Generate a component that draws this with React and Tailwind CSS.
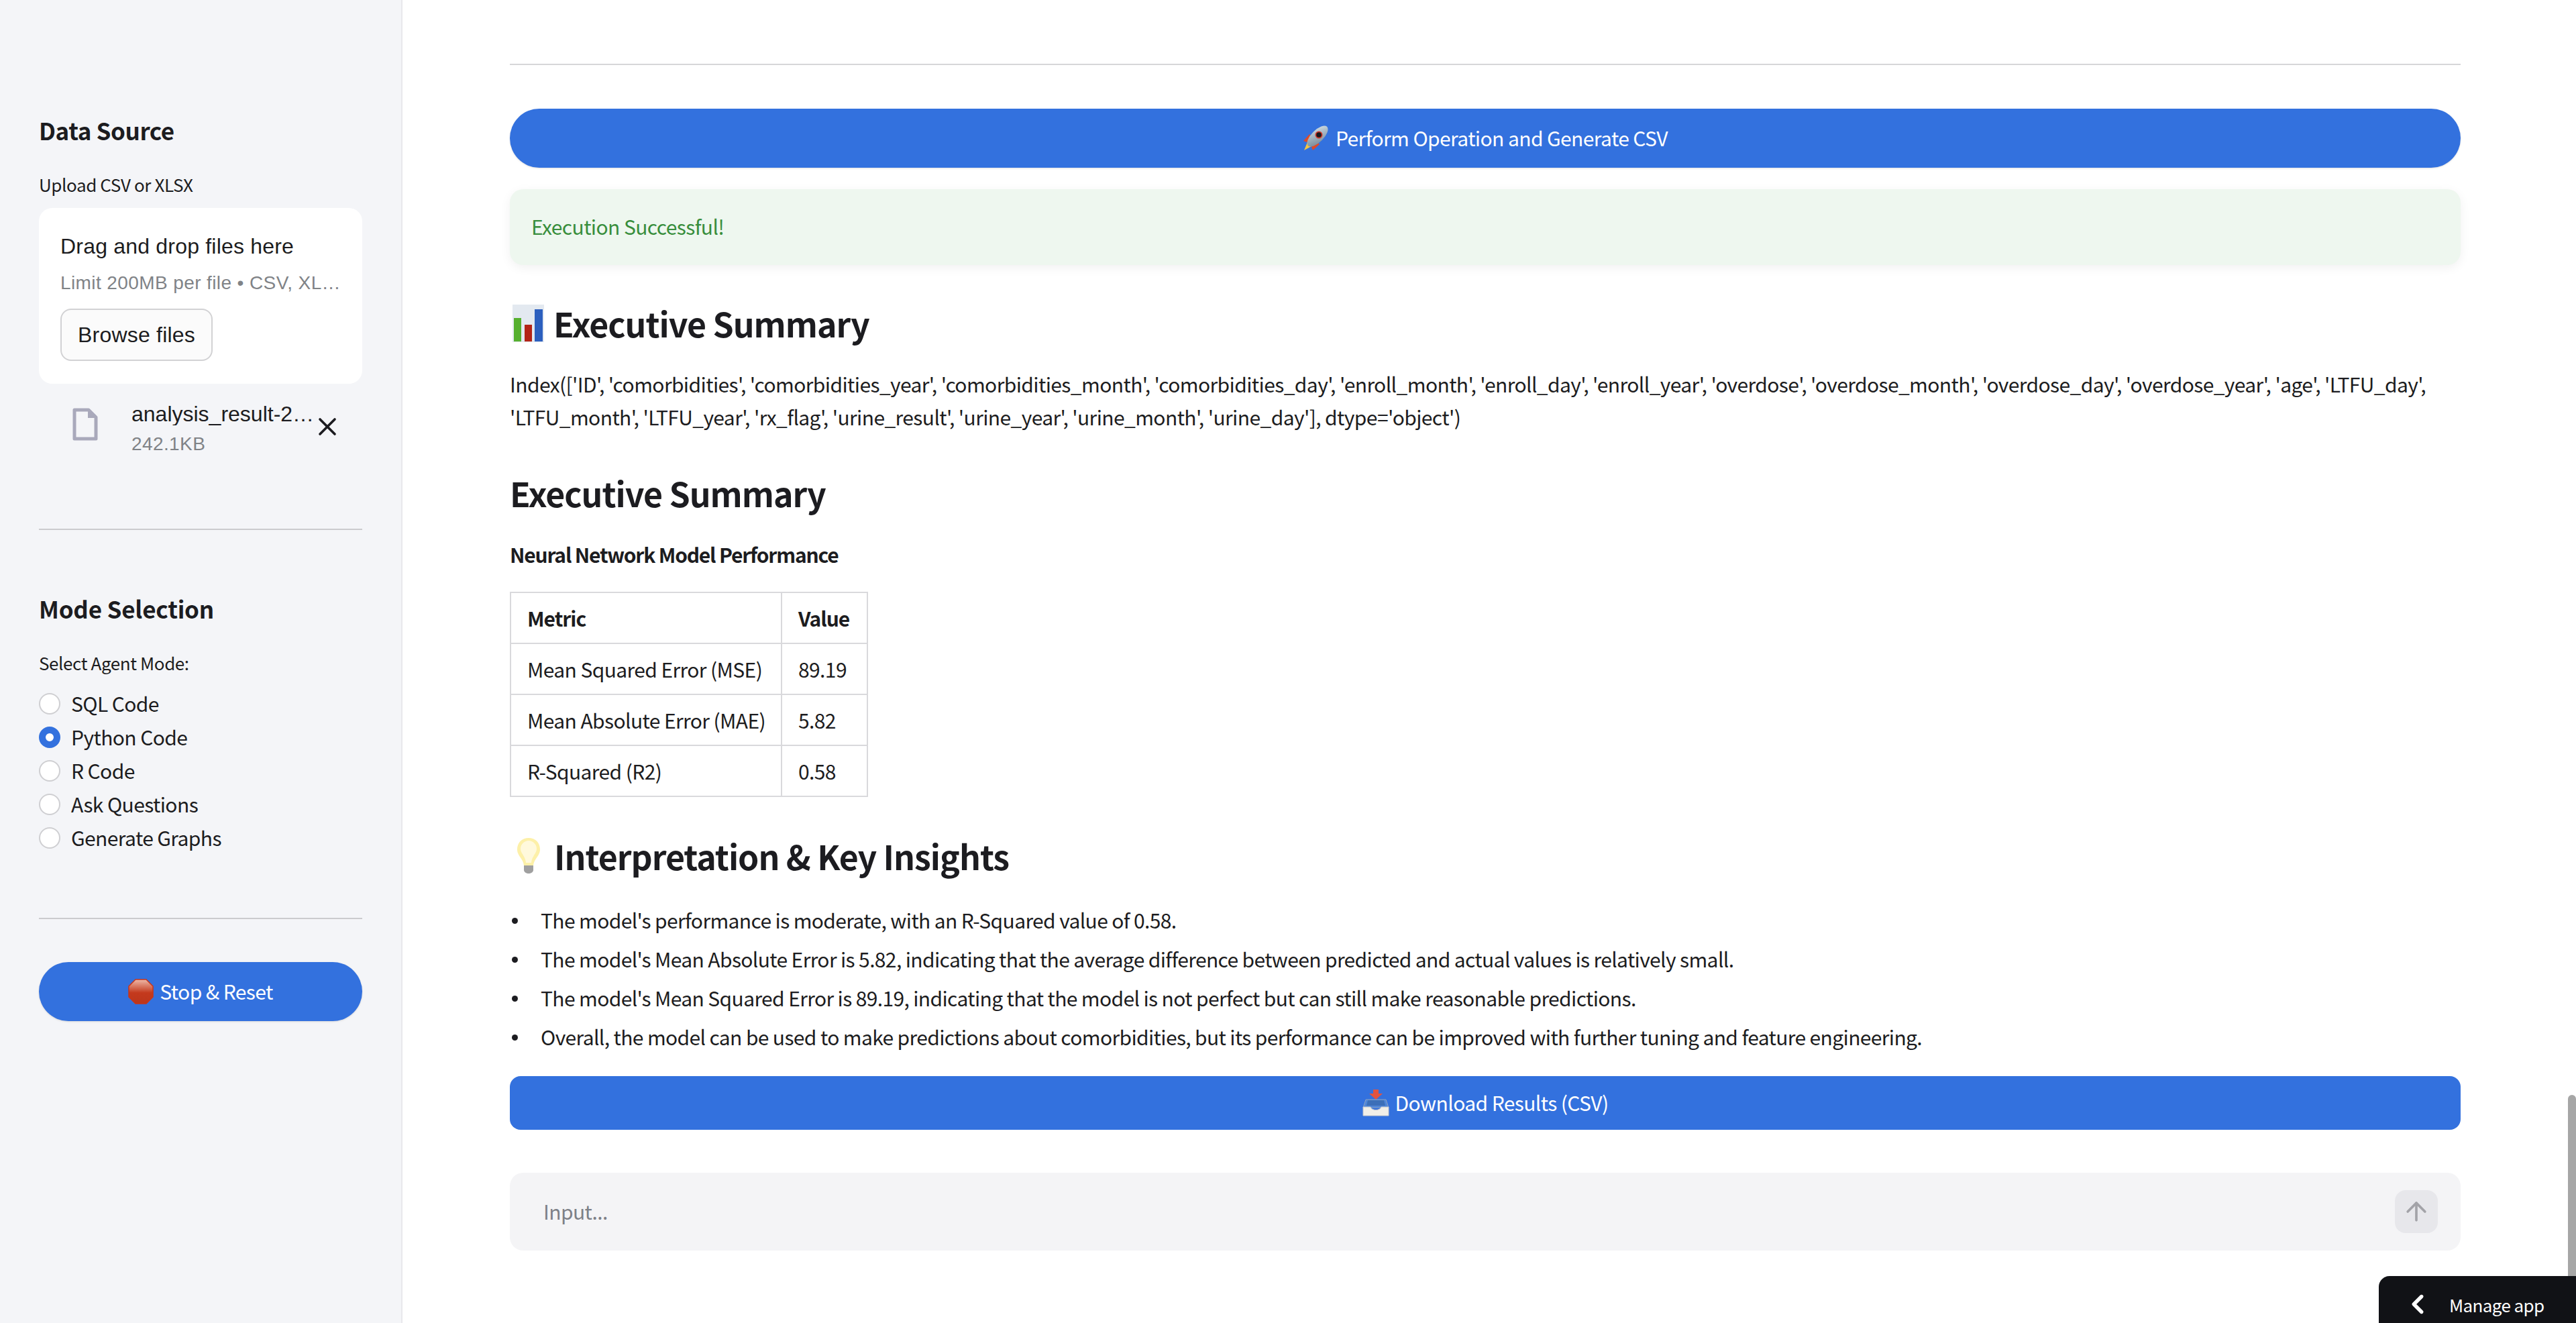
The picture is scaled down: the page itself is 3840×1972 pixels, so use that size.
import { ArrowUp, ChevronLeft, X } from "lucide-react";

function Rocket() {
    return (
        <svg width="38" height="38" viewBox="0 0 38 38" className="shrink-0">
            <defs>
                <linearGradient id="rocketBody" x1="0" y1="1" x2="1" y2="0">
                    <stop offset="0" stopColor="#6f8291" />
                    <stop offset="0.6" stopColor="#a9bac6" />
                    <stop offset="1" stopColor="#dbe5ea" />
                </linearGradient>
            </defs>
            <path d="M1 23 L10 13 L15 19 L6 25 Z" fill="#dd4a2a" />
            <path d="M15 37 L25 28 L19 23 L13 32 Z" fill="#dd4a2a" />
            <path d="M2 37 L7 25 L13 31 Z" fill="#f7c63f" />
            <ellipse cx="22" cy="16" rx="20" ry="9" transform="rotate(-45 22 16)" fill="url(#rocketBody)" />
            <circle cx="24" cy="14" r="5.5" fill="#d23a2c" />
            <circle cx="24" cy="14" r="3.8" fill="#17171c" />
        </svg>
    );
}

function Inbox() {
    return (
        <svg width="40" height="40" viewBox="0 0 40 40" className="shrink-0">
            <path d="M16 0 H24 V6 H30 L20 15 L10 6 H16 Z" fill="#e2533f" />
            <path d="M5 15 H35 L39 27 H1 Z" fill="#4f86d8" stroke="#8fa3bd" strokeWidth="1" />
            <path d="M8 16 H32 L34 24 H6 Z" fill="#3c6fb8" />
            <path d="M1 26 H12 C14 32 26 32 28 26 H39 V39 H1 Z" fill="#f1efe8" stroke="#c6c8cb" strokeWidth="1" />
        </svg>
    );
}

function Chart() {
    return (
        <svg width="47" height="56" viewBox="0 0 47 56" className="shrink-0 -mt-[6px]">
            <rect width="47" height="56" fill="#e3e9f0" />
            <rect x="2" y="20" width="11" height="35" fill="#56b02f" />
            <rect x="18" y="30" width="11" height="25" fill="#b32416" />
            <rect x="33" y="7" width="12" height="48" fill="#2c5fbe" />
        </svg>
    );
}

function Bulb() {
    return (
        <svg width="36" height="54" viewBox="0 0 36 54" className="shrink-0 -mt-[6px]">
            <path d="M18 1 C8 1 1 8 1 18 C1 28 10 32 11 42 H25 C26 32 35 28 35 18 C35 8 28 1 18 1 Z" fill="#fdf0a8" />
            <path d="M18 5 C12 5 6 10 6 17 C6 24 13 28 14 38 H22 C23 28 30 24 30 17 C30 10 24 5 18 5 Z" fill="#fff9dc" />
            <path d="M11 42 H25 V49 C25 52 21 54 18 54 C15 54 11 52 11 49 Z" fill="#a0a0a0" />
        </svg>
    );
}

function StopSign() {
    return (
        <svg width="38" height="38" viewBox="0 0 38 38" className="shrink-0">
            <defs>
                <linearGradient id="stopFill" x1="0" y1="0" x2="0" y2="1">
                    <stop offset="0" stopColor="#eeb9a8" />
                    <stop offset="0.55" stopColor="#c4391d" />
                    <stop offset="1" stopColor="#bb361b" />
                </linearGradient>
            </defs>
            <path d="M11 1 H27 L37 11 V27 L27 37 H11 L1 27 V11 Z" fill="url(#stopFill)" stroke="#c8351a" strokeWidth="1.5" />
        </svg>
    );
}

function FileIcon() {
    return (
        <svg width="38" height="49" viewBox="0 0 38 49" className="shrink-0">
            <path d="M3 3 H24 L35 14 V46 H3 Z" fill="none" stroke="#a9a9bb" strokeWidth="5" strokeLinejoin="round" />
            <path d="M23 1 L37 15 H23 Z" fill="#a9a9bb" />
        </svg>
    );
}

const modes = ["SQL Code", "Python Code", "R Code", "Ask Questions", "Generate Graphs"];

const rows = [
    ["Mean Squared Error (MSE)", "89.19"],
    ["Mean Absolute Error (MAE)", "5.82"],
    ["R-Squared (R2)", "0.58"],
];

const insights = [
    "The model's performance is moderate, with an R-Squared value of 0.58.",
    "The model's Mean Absolute Error is 5.82, indicating that the average difference between predicted and actual values is relatively small.",
    "The model's Mean Squared Error is 89.19, indicating that the model is not perfect but can still make reasonable predictions.",
    "Overall, the model can be used to make predictions about comorbidities, but its performance can be improved with further tuning and feature engineering.",
];

function Sidebar() {
    return (
        <aside className="w-[600px] shrink-0 h-full bg-[#f4f5f8] border-r-2 border-[#e8e8ec] px-[58px]">
            <h2 className="mt-[174px] h-[40px] leading-[40px] text-[35px] font-semibold tracking-[-0.4px]">Data Source</h2>
            <p className="mt-[46px] h-[30px] leading-[30px] text-[26px] tracking-[-0.4px]">Upload CSV or XLSX</p>
            <div className="mt-[20px] h-[262px] bg-white rounded-[20px] px-[32px] pt-[37px] font-['Liberation_Sans',sans-serif]">
                <p className="h-[40px] leading-[40px] text-[32px] tracking-[0.2px]">Drag and drop files here</p>
                <p className="mt-[20px] w-[418px] h-[30px] leading-[30px] text-[28px] tracking-[0.4px] text-[#808387] truncate">Limit 200MB per file • CSV, XLSX</p>
                <button className="mt-[23px] w-[227px] h-[78px] border-2 border-[#d2d2d4] rounded-[16px] bg-[#fbfbfb] text-[32px] tracking-[0.2px]">Browse files</button>
            </div>
            <div className="mt-[28px] flex h-[79px] font-['Liberation_Sans',sans-serif]">
                <div className="ml-[50px] mt-[8px] w-[88px]">
                    <FileIcon />
                </div>
                <div className="w-[276px]">
                    <p className="h-[34px] leading-[34px] text-[32px] truncate">analysis_result-2025.csv</p>
                    <p className="mt-[11px] h-[34px] leading-[34px] text-[28px] tracking-[0.4px] text-[#808387]">242.1KB</p>
                </div>
                <X size={44} strokeWidth={2} className="-ml-[6px] mt-[14px] shrink-0 text-[#1c1c20]" />
            </div>
            <div className="mt-[109px] h-[2px] bg-[#cbcbce]" />
            <h2 className="mt-[97px] h-[40px] leading-[40px] text-[35px] font-semibold tracking-[-0.2px]">Mode Selection</h2>
            <p className="mt-[46px] h-[30px] leading-[30px] text-[26px] tracking-[-0.4px]">Select Agent Mode:</p>
            <div className="mt-[21px]">
                {modes.map((mode) => (
                    <div key={mode} className="flex items-center h-[50px] gap-[16px] text-[30px] tracking-[-0.6px]">
                        {mode === "Python Code" ? (
                            <span className="w-[32px] h-[32px] rounded-full border-[10px] border-[#3371de] bg-white" />
                        ) : (
                            <span className="w-[32px] h-[32px] rounded-full border-2 border-[#cfcfd2] bg-white" />
                        )}
                        <span className="-mt-[2px]">{mode}</span>
                    </div>
                ))}
            </div>
            <div className="mt-[94px] h-[2px] bg-[#cbcbce]" />
            <button className="mt-[64px] w-full h-[88px] rounded-full bg-[#3371de] text-white text-[30px] tracking-[-0.6px] flex items-center justify-center gap-[9px] shadow-sm">
                <StopSign />
                <span className="-mt-[2px]">Stop &amp; Reset</span>
            </button>
        </aside>
    );
}

function Main() {
    return (
        <main className="flex-1 h-full pl-[160px] pr-[172px] pt-[95px] text-[30px] tracking-[-0.6px]">
            <div className="h-[2px] bg-[#d6d6d8]" />
            <button className="mt-[65px] w-full h-[88px] rounded-full bg-[#3371de] text-white flex items-center justify-center gap-[11px] shadow-sm">
                <Rocket />
                <span className="-mt-[2px]">Perform Operation and Generate CSV</span>
            </button>
            <div className="mt-[32px] h-[113px] rounded-[20px] bg-[#eef7ef] text-[#388e3c] flex items-center pl-[32px] shadow-[0_4px_16px_rgba(0,0,0,0.06)]">
                <span className="-mt-[2px]">Execution Successful!</span>
            </div>
            <h2 className="mt-[55px] h-[70px] flex items-center gap-[14px] pl-[4px] text-[50px] tracking-[-1px] font-semibold">
                <Chart />
                <span className="-mt-[8px]">Executive Summary</span>
            </h2>
            <p className="mt-[28px] leading-[49px]">
                Index(['ID', 'comorbidities', 'comorbidities_year', 'comorbidities_month', 'comorbidities_day', 'enroll_month', 'enroll_day', 'enroll_year', 'overdose', 'overdose_month', 'overdose_day', 'overdose_year', 'age', 'LTFU_day', 'LTFU_month', 'LTFU_year', 'rx_flag', 'urine_result', 'urine_year', 'urine_month', 'urine_day'], dtype='object')
            </p>
            <h2 className="mt-[53px] h-[70px] leading-[70px] text-[50px] tracking-[-1px] font-semibold">Executive Summary</h2>
            <p className="mt-[32px] h-[50px] leading-[50px] tracking-[-1.2px] font-semibold">Neural Network Model Performance</p>
            <table className="mt-[31px] border-collapse">
                <thead>
                    <tr className="h-[76px]">
                        <th className="w-[404px] border-2 border-[#d9d9dc] pl-[24px] text-left font-semibold tracking-[-1px]">Metric</th>
                        <th className="w-[128px] border-2 border-[#d9d9dc] pl-[24px] text-left font-semibold tracking-[-1px]">Value</th>
                    </tr>
                </thead>
                <tbody>
                    {rows.map(([metric, value]) => (
                        <tr key={metric} className="h-[76px]">
                            <td className="border-2 border-[#d9d9dc] pl-[24px] whitespace-nowrap">{metric}</td>
                            <td className="border-2 border-[#d9d9dc] pl-[24px]">{value}</td>
                        </tr>
                    ))}
                </tbody>
            </table>
            <h2 className="mt-[55px] h-[70px] flex items-center gap-[20px] pl-[10px] text-[50px] tracking-[-1px] font-semibold">
                <Bulb />
                <span className="-mt-[6px]">Interpretation &amp; Key Insights</span>
            </h2>
            <ul className="mt-[30px] tracking-[-0.63px]">
                {insights.map((item) => (
                    <li key={item} className="flex items-center h-[58px]">
                        <span className="w-[9px] h-[9px] rounded-full bg-[#1c1c20] ml-[3px] mr-[34px]" />
                        <span className="-mt-[2px]">{item}</span>
                    </li>
                ))}
            </ul>
            <button className="mt-[29px] w-full h-[80px] rounded-[16px] bg-[#3371de] text-white flex items-center justify-center gap-[9px]">
                <Inbox />
                <span className="-mt-[2px]">Download Results (CSV)</span>
            </button>
            <div className="mt-[64px] h-[116px] rounded-[20px] bg-[#f4f4f6] flex items-center justify-between pl-[50px] pr-[34px]">
                <span className="text-[#7d8087] -mt-[2px]">Input...</span>
                <button className="w-[64px] h-[64px] rounded-[16px] bg-[#e7e7eb] flex items-center justify-center">
                    <ArrowUp size={44} strokeWidth={2} className="text-[#a3a3a8]" />
                </button>
            </div>
        </main>
    );
}

export default function App() {
    return (
        <div className="relative flex w-full h-[1972px] overflow-hidden bg-white text-[#1c1c20] font-['Noto_Sans_CJK_SC','Noto_Sans',sans-serif]">
            <Sidebar />
            <Main />
            <div className="absolute right-0 top-[1632px] w-[12px] h-[340px] rounded-t-full bg-[#a6a6a6]" />
            <div className="absolute right-0 bottom-0 w-[294px] h-[70px] rounded-tl-[16px] bg-[#111216] text-white flex items-center pl-[35px] pt-[14px]">
                <ChevronLeft size={46} strokeWidth={2.8} />
                <span className="ml-[24px] text-[26px] tracking-[-0.6px]">Manage app</span>
            </div>
        </div>
    );
}
